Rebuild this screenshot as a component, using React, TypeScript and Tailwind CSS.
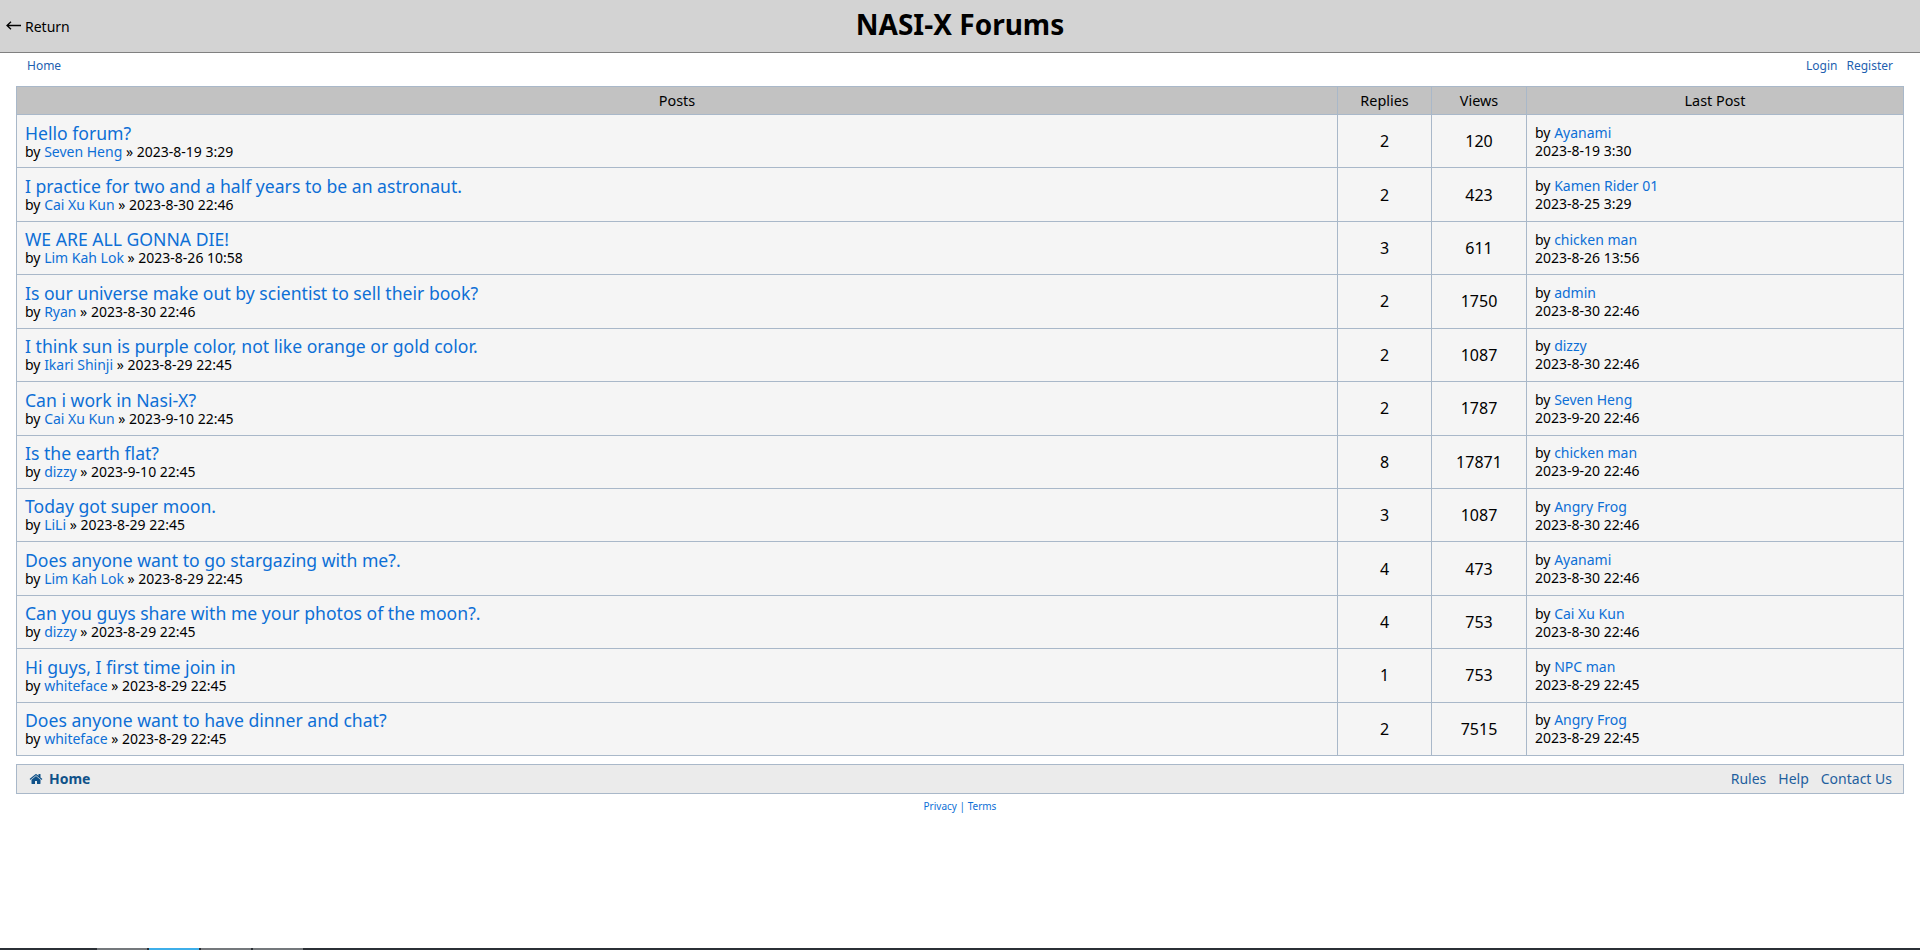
type Post = {
  title: string;
  author: string;
  date: string;
  replies: number;
  views: number;
  lastBy: string;
  lastDate: string;
};

const posts: Post[] = [
  { title: "Hello forum?", author: "Seven Heng", date: "2023-8-19 3:29", replies: 2, views: 120, lastBy: "Ayanami", lastDate: "2023-8-19 3:30" },
  { title: "I practice for two and a half years to be an astronaut.", author: "Cai Xu Kun", date: "2023-8-30 22:46", replies: 2, views: 423, lastBy: "Kamen Rider 01", lastDate: "2023-8-25 3:29" },
  { title: "WE ARE ALL GONNA DIE!", author: "Lim Kah Lok", date: "2023-8-26 10:58", replies: 3, views: 611, lastBy: "chicken man", lastDate: "2023-8-26 13:56" },
  { title: "Is our universe make out by scientist to sell their book?", author: "Ryan", date: "2023-8-30 22:46", replies: 2, views: 1750, lastBy: "admin", lastDate: "2023-8-30 22:46" },
  { title: "I think sun is purple color, not like orange or gold color.", author: "Ikari Shinji", date: "2023-8-29 22:45", replies: 2, views: 1087, lastBy: "dizzy", lastDate: "2023-8-30 22:46" },
  { title: "Can i work in Nasi-X?", author: "Cai Xu Kun", date: "2023-9-10 22:45", replies: 2, views: 1787, lastBy: "Seven Heng", lastDate: "2023-9-20 22:46" },
  { title: "Is the earth flat?", author: "dizzy", date: "2023-9-10 22:45", replies: 8, views: 17871, lastBy: "chicken man", lastDate: "2023-9-20 22:46" },
  { title: "Today got super moon.", author: "LiLi", date: "2023-8-29 22:45", replies: 3, views: 1087, lastBy: "Angry Frog", lastDate: "2023-8-30 22:46" },
  { title: "Does anyone want to go stargazing with me?.", author: "Lim Kah Lok", date: "2023-8-29 22:45", replies: 4, views: 473, lastBy: "Ayanami", lastDate: "2023-8-30 22:46" },
  { title: "Can you guys share with me your photos of the moon?.", author: "dizzy", date: "2023-8-29 22:45", replies: 4, views: 753, lastBy: "Cai Xu Kun", lastDate: "2023-8-30 22:46" },
  { title: "Hi guys, I first time join in", author: "whiteface", date: "2023-8-29 22:45", replies: 1, views: 753, lastBy: "NPC man", lastDate: "2023-8-29 22:45" },
  { title: "Does anyone want to have dinner and chat?", author: "whiteface", date: "2023-8-29 22:45", replies: 2, views: 7515, lastBy: "Angry Frog", lastDate: "2023-8-29 22:45" },
];

const cell = "border border-[#a9b8c9] bg-[#f5f5f5]";
const head = "border border-[#a9b8c9] bg-[#c2c2c2] h-[28px] text-[14.4px] font-normal text-black";

function PostRow({ post }: { post: Post }) {
  return (
    <tr>
      <td className={`${cell} px-2 pt-[8.5px] pb-[6.93px]`}>
        <a href="#" className="block text-[17.6px] leading-[18px] text-[#0d6fd6]">{post.title}</a>
        <div className="text-sm leading-[19px]">
          by <a href="#" className="text-[#0d6fd6]">{post.author}</a> » {post.date}
        </div>
      </td>
      <td className={`${cell} text-center text-base`}>{post.replies}</td>
      <td className={`${cell} text-center text-base`}>{post.views}</td>
      <td className={`${cell} px-2 pt-px text-sm leading-[18px]`}>
        <div>
          by <a href="#" className="text-[#0d6fd6]">{post.lastBy}</a>
        </div>
        <div>{post.lastDate}</div>
      </td>
    </tr>
  );
}

export default function App() {
  return (
    <div className="flex min-h-screen flex-col bg-white font-['Noto_Sans',sans-serif] text-black">
      <header className="grid h-[53px] grid-cols-[1fr_auto_1fr] items-center border-b border-[#808080] bg-[#d3d3d3]">
        <a href="#" className="flex items-center pl-[6px] pt-px text-sm text-black">
          <svg viewBox="0 0 15 9" className="mr-[4px] -mt-[2px] h-[9px] w-[15px]" fill="none" stroke="currentColor" strokeWidth="1.3">
            <path d="M15 4.5H1M5 .7 1 4.5l4 3.8" />
          </svg>
          Return
        </a>
        <h1 className="pb-[5px] text-[28px] font-bold">NASI-X Forums</h1>
      </header>

      <nav className="mb-2 flex h-[25px] items-center justify-between pl-[27px] pr-[27px] text-xs text-[#1e5fb0]">
        <a href="#">Home</a>
        <div className="flex gap-[9px]">
          <a href="#">Login</a>
          <a href="#">Register</a>
        </div>
      </nav>

      <main className="px-4">
        <table className="w-full table-fixed border-collapse">
          <thead>
            <tr>
              <th className={head}>Posts</th>
              <th className={`${head} w-[94px]`}>Replies</th>
              <th className={`${head} w-[95px]`}>Views</th>
              <th className={`${head} w-[377px]`}>Last Post</th>
            </tr>
          </thead>
          <tbody>
            {posts.map((post) => (
              <PostRow key={post.title} post={post} />
            ))}
          </tbody>
        </table>

        <div className="mt-2 flex h-[30px] items-center justify-between border border-[#a9b8c9] bg-[#ebebeb] pl-[12px] pr-[11px] text-sm text-[#1f5f9e]">
          <a href="#" className="flex items-center gap-[6px] font-bold text-[#105289]">
            <svg viewBox="0 0 1792 1792" className="h-[14px] w-[14px]" fill="currentColor">
              <path d="M1472 992v480q0 26-19 45t-45 19h-384v-384h-256v384h-384q-26 0-45-19t-19-45v-480q0-1 .5-3t.5-3l575-474 575 474q1 2 1 6zm223-69l-62 74q-8 9-21 11h-3q-13 0-21-7l-692-577-692 577q-12 8-24 7-13-2-21-11l-62-74q-8-10-7-23.5t11-21.5l719-599q32-26 76-26t76 26l244 204v-195q0-14 9-23t23-9h192q14 0 23 9t9 23v408l219 182q10 8 11 21.5t-7 23.5z" />
            </svg>
            Home
          </a>
          <div className="flex gap-3">
            <a href="#">Rules</a>
            <a href="#">Help</a>
            <a href="#">Contact Us</a>
          </div>
        </div>
      </main>

      <footer className="mt-[5px] text-center text-[10px] text-[#0d6fd6]">
        <a href="#">Privacy</a> | <a href="#">Terms</a>
      </footer>

      <div className="mt-auto flex h-[2px] bg-[#2b3036] pl-[97px]">
        <div className="w-[50px] bg-[#74787c]" />
        <div className="ml-[2px] w-[50px] bg-[#3daee9]" />
        <div className="ml-[2px] w-[50px] bg-[#74787c]" />
        <div className="ml-[2px] w-[50px] bg-[#74787c]" />
      </div>
    </div>
  );
}
